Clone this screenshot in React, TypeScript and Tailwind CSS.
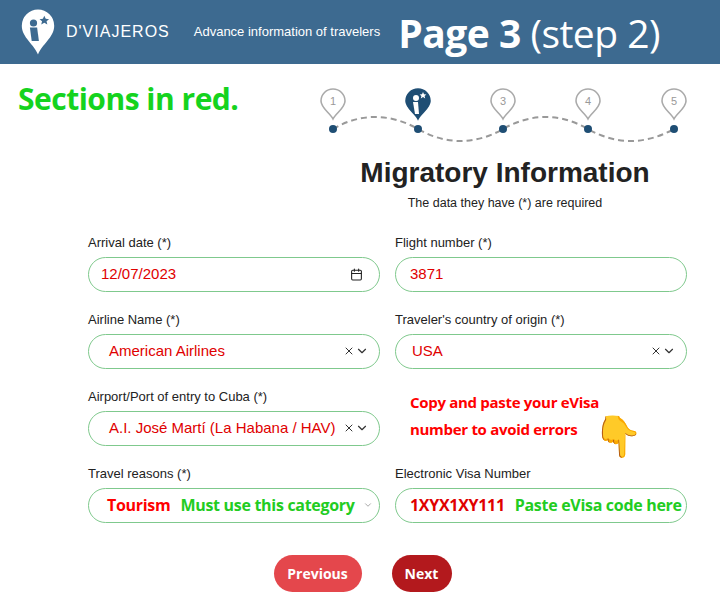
import { X, ChevronDown, Calendar } from "lucide-react";

const sans = "font-[Liberation_Sans,Arial,sans-serif]";
const fira = "font-[Open_Sans,sans-serif]";

function Pin({ x, n, active }: { x: number; n: number; active?: boolean }) {
  const fill = active ? "#1f4e74" : "#fff";
  const stroke = active ? "#1f4e74" : "#aaa";
  return (
    <g transform={`translate(${x},0)`}>
      <path d="M0 30 C-3 24 -12 19 -12 12 A12 12 0 0 1 12 12 C12 19 3 24 0 30 Z" fill={fill} stroke={stroke} strokeWidth="1.6" transform="translate(0,1)" />
      {active ? (
        <>
          <circle cx="-2" cy="10" r="3" fill="#fff" />
          <path d="M-5 14 L0 14 L1 26 L-3 26 Z" fill="#fff" />
          <path d="M5 4 l1 2.2 2.4 .2 -1.8 1.6 .6 2.4 -2.2-1.3 -2.2 1.3 .6-2.4 -1.8-1.6 2.4-.2z" fill="#fff" />
        </>
      ) : (
        <text x="0" y="17" textAnchor="middle" fontSize="11" fill="#999" fontFamily="Liberation Sans, Arial">{n}</text>
      )}
      <circle cx="0" cy="41" r="4" fill="#1f4e74" />
    </g>
  );
}

function Field({ label, children }: { label: string; children: React.ReactNode }) {
  return (
    <div className="flex flex-col">
      <div className="text-[13px] text-[#222] h-[22px] leading-[16px]">{label}</div>
      {children}
    </div>
  );
}

const box = "h-[35px] rounded-full border border-[#7fc98d] flex items-center px-[20px] bg-white";

export default function App() {
  return (
    <div className={`w-[720px] h-[609px] bg-white ${sans} overflow-hidden`}>
      <div className="h-[64px] bg-[#3d6a90] flex items-center pl-[20px]">
        <svg width="36" height="48" viewBox="0 0 40 52">
          <path d="M20 51 C16 40 2 32 2 19 A18 18 0 0 1 38 19 C38 32 24 40 20 51Z" fill="#fff" />
          <circle cx="15" cy="16" r="4" fill="#3d6a90" />
          <path d="M11 21 L19 21 L21 36 L13 36 Z" fill="#3d6a90" />
          <path d="M27 8 l1.6 3.4 3.7.3 -2.8 2.4 .9 3.6 -3.4-2 -3.4 2 .9-3.6 -2.8-2.4 3.7-.3z" fill="#3d6a90" />
        </svg>
        <div className="ml-[10px] text-white text-[16px] tracking-[1px] font-light">D'VIAJEROS</div>
        <div className="ml-[24px] text-white text-[13px]">Advance information of travelers</div>
        <div className={`ml-[18px] text-white text-[39px] leading-none ${fira} whitespace-nowrap tracking-[-0.5px]`}>
          <span className="font-bold">Page 3</span> (step 2)
        </div>
      </div>

      <div className="flex">
        <div className={`w-[320px] pl-[18px] pt-[20px] text-[30px] font-bold text-[#15d31e] ${fira} leading-none tracking-[-0.5px]`}>Sections in red.</div>
        <div className="w-[370px] flex flex-col items-center">
          <svg width="370" height="48" viewBox="0 0 370 48" className="mt-[24px] overflow-visible">
            <path d="M13 41 C40 25 70 25 98 41 C126 57 155 57 183 41 C211 25 240 25 268 41 C296 57 325 57 354 41" fill="none" stroke="#999" strokeWidth="2" strokeDasharray="6 4" />
            <Pin x={13} n={1} />
            <Pin x={98} n={2} active />
            <Pin x={183} n={3} />
            <Pin x={268} n={4} />
            <Pin x={354} n={5} />
          </svg>
          <div className="text-[28px] font-bold text-[#222] mt-[20px] leading-[34px]">Migratory Information</div>
          <div className="text-[12.5px] text-[#222] mt-[4px]">The data they have (*) are required</div>
        </div>
      </div>

      <div className="ml-[88px] w-[599px] grid grid-cols-[292px_292px] gap-x-[15px] gap-y-[20px] mt-[22px] text-[15px]">
        <Field label="Arrival date (*)">
          <div className={`${box} justify-between pl-[12px] pr-[16px] text-[#e00000]`}>12/07/2023<Calendar size={13} className="text-[#222]" /></div>
        </Field>
        <Field label="Flight number (*)">
          <div className={`${box} pl-[14px] text-[#e00000]`}>3871</div>
        </Field>
        <Field label="Airline Name (*)">
          <div className={`${box} justify-between pr-[10px] text-[#e00000]`}>American Airlines<span className="flex items-center text-[#333]"><X size={12} /><ChevronDown size={14} /></span></div>
        </Field>
        <Field label="Traveler's country of origin (*)">
          <div className={`${box} justify-between pl-[16px] pr-[10px] text-[#e00000]`}>USA<span className="flex items-center text-[#333]"><X size={12} /><ChevronDown size={14} /></span></div>
        </Field>
        <Field label="Airport/Port of entry to Cuba (*)">
          <div className={`${box} justify-between pr-[10px] text-[#e00000]`}>A.I. José Martí (La Habana / HAV)<span className="flex items-center text-[#333]"><X size={12} /><ChevronDown size={14} /></span></div>
        </Field>
        <div className={`relative ${fira} font-bold text-[#ff0000] text-[15px] leading-[27px] pl-[15px] -mb-[4px] tracking-[-0.3px]`}>
          Copy and paste your eVisa<br />number to avoid errors
          <span className="absolute left-[198px] top-[26px] text-[40px] leading-none">👇</span>
        </div>
        <Field label="Travel reasons (*)">
          <div className={`${box} justify-between pl-[18px] pr-[6px] ${fira} font-bold tracking-[-0.3px]`}>
            <span><span className="text-[#ff0000] text-[16px]">Tourism</span><span className="text-[#22cc22] ml-[10px] text-[16px]">Must use this category</span></span>
            <ChevronDown size={10} className="text-[#999]" />
          </div>
        </Field>
        <Field label="Electronic Visa Number">
          <div className={`${box} pl-[14px] ${fira} font-bold whitespace-nowrap tracking-[-0.3px] text-[16px]`}>
            <span className="text-[#e00000]">1XYX1XY111</span><span className="text-[#22cc22] ml-[10px]">Paste eVisa code here</span>
          </div>
        </Field>
      </div>

      <div className={`flex justify-center gap-[30px] mt-[32px] ml-[5px] ${fira} font-bold text-[14px] text-white`}>
        <button className="h-[37px] w-[88px] rounded-full bg-[#e4474c]">Previous</button>
        <button className="h-[37px] w-[60px] rounded-full bg-[#b3191d]">Next</button>
      </div>
    </div>
  );
}
